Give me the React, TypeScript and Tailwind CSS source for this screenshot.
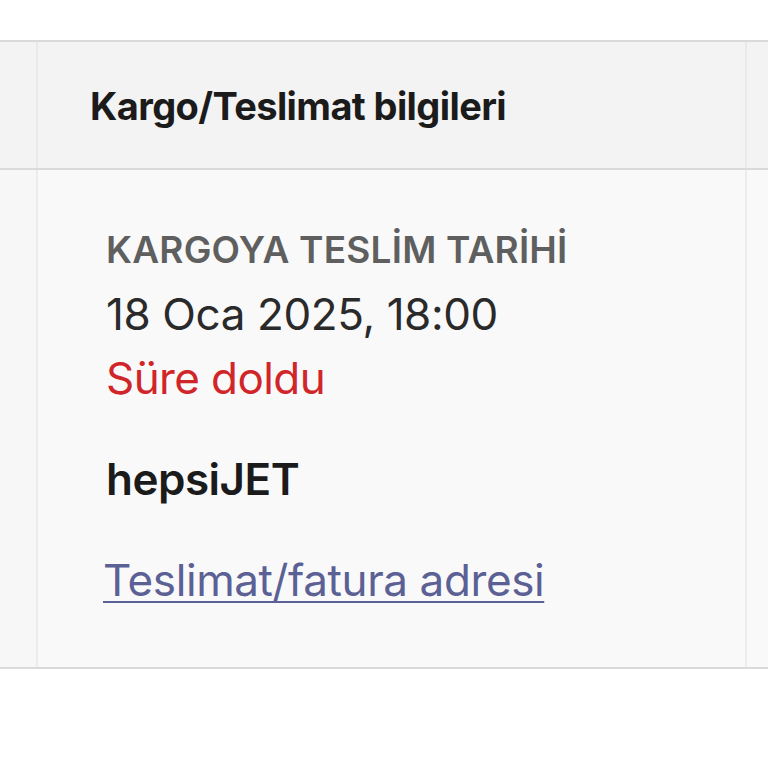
const font = { fontFamily: 'Inter, "Noto Sans", sans-serif' }

export default function App() {
  return (
    <div className="w-[768px] h-[768px] bg-white overflow-hidden" style={font}>
      <div className="h-[40px]" />
      <div className="border-t-2 border-b-2 border-[#dadada]">
        {/* Header row */}
        <div className="flex h-[128px] bg-[#f3f3f3] border-b-2 border-[#dadada]">
          <div className="w-[38px] border-r-2 border-[#e9e9e9]" />
          <div className="w-[709px] flex items-center pl-[52px] border-r-2 border-[#e9e9e9]">
            <span className="text-[38px] leading-none font-bold tracking-[-0.6px] text-[#1b1b1b] pt-[2px]">
              Kargo/Teslimat bilgileri
            </span>
          </div>
          <div className="flex-1" />
        </div>

        {/* Body row */}
        <div className="flex h-[497px] bg-[#f9f9f9]">
          <div className="w-[38px] border-r-2 border-[#ececec] bg-[#f7f7f7]" />
          <div className="w-[709px] pl-[68px] pt-[58px] border-r-2 border-[#ececec]">
            <div className="text-[37px] leading-[44px] font-semibold tracking-[0.2px] text-[#5f5f5f]">
              KARGOYA TESLİM TARİHİ
            </div>
            <div className="mt-[10px] text-[44px] leading-[64px] tracking-[-0.4px] text-[#2a2a2a]">
              18 Oca 2025, 18:00
            </div>
            <div className="text-[44px] leading-[64px] tracking-[-0.6px] text-[#d0262a]">
              Süre doldu
            </div>
            <div className="mt-[37px] text-[44px] leading-[64px] font-semibold tracking-[-0.5px] text-[#1b1b1b]">
              hepsiJET
            </div>
            <a
              href="#"
              className="block mt-[37px] -ml-[3px] text-[44px] leading-[64px] tracking-[-0.4px] text-[#5b6095] underline decoration-2 underline-offset-[5px]"
            >
              Teslimat/fatura adresi
            </a>
          </div>
          <div className="flex-1" />
        </div>
      </div>
    </div>
  )
}
